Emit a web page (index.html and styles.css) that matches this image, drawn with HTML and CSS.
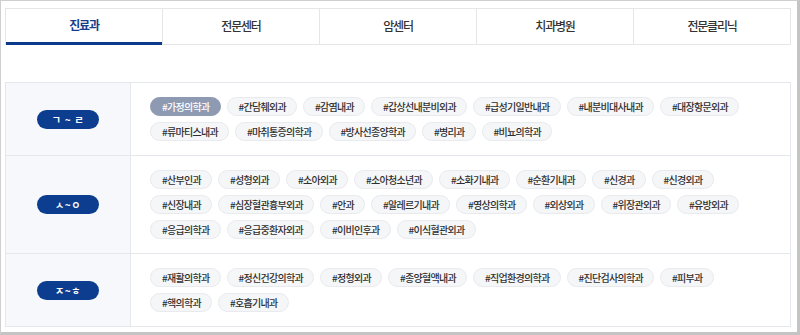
FILE: index.html
```html
<!DOCTYPE html>
<html lang="ko">
<head>
    <meta charset="UTF-8">
    <meta name="viewport" content="width=device-width, initial-scale=1.0">
    <title>진료과</title>
    <link rel="stylesheet" href="styles.css">
</head>
<body>

<div class="frame">
    <ul class="tabs">
        <li class="active">진료과</li>
        <li>전문센터</li>
        <li>암센터</li>
        <li>치과병원</li>
        <li>전문클리닉</li>
    </ul>

    <div class="dept-table">
        <div class="dept-row">
            <div class="dept-head"><span class="badge">ㄱ ~ ㄹ</span></div>
            <div class="dept-tags">
                <span class="tag on">#가정의학과</span>
                <span class="tag">#간담췌외과</span>
                <span class="tag">#감염내과</span>
                <span class="tag">#갑상선내분비외과</span>
                <span class="tag">#급성기일반내과</span>
                <span class="tag">#내분비대사내과</span>
                <span class="tag">#대장항문외과</span>
                <span class="tag">#류마티스내과</span>
                <span class="tag">#마취통증의학과</span>
                <span class="tag">#방사선종양학과</span>
                <span class="tag">#병리과</span>
                <span class="tag">#비뇨의학과</span>
            </div>
        </div>
        <div class="dept-row">
            <div class="dept-head"><span class="badge">ㅅ~ㅇ</span></div>
            <div class="dept-tags">
                <span class="tag">#산부인과</span>
                <span class="tag">#성형외과</span>
                <span class="tag">#소아외과</span>
                <span class="tag">#소아청소년과</span>
                <span class="tag">#소화기내과</span>
                <span class="tag">#순환기내과</span>
                <span class="tag">#신경과</span>
                <span class="tag">#신경외과</span>
                <span class="tag">#신장내과</span>
                <span class="tag">#심장혈관흉부외과</span>
                <span class="tag">#안과</span>
                <span class="tag">#알레르기내과</span>
                <span class="tag">#영상의학과</span>
                <span class="tag">#외상외과</span>
                <span class="tag">#위장관외과</span>
                <span class="tag">#유방외과</span>
                <span class="tag">#응급의학과</span>
                <span class="tag">#응급중환자외과</span>
                <span class="tag">#이비인후과</span>
                <span class="tag">#이식혈관외과</span>
            </div>
        </div>
        <div class="dept-row">
            <div class="dept-head"><span class="badge">ㅈ~ㅎ</span></div>
            <div class="dept-tags">
                <span class="tag">#재활의학과</span>
                <span class="tag">#정신건강의학과</span>
                <span class="tag">#정형외과</span>
                <span class="tag">#종양혈액내과</span>
                <span class="tag">#직업환경의학과</span>
                <span class="tag">#진단검사의학과</span>
                <span class="tag">#피부과</span>
                <span class="tag">#핵의학과</span>
                <span class="tag">#호흡기내과</span>
            </div>
        </div>
    </div>
</div>

</body>
</html>
```

FILE: styles.css
```css
* {
    box-sizing: border-box;
}

body {
    margin: 0;
    font-family: "Noto Sans CJK KR", "Noto Sans", sans-serif;
    background-color: #fff;
    color: #333;
}

.frame {
    width: 800px;
    height: 335px;
    border: 1px solid #cfcfcf;
    border-right-width: 3px;
    border-bottom-width: 3px;
    border-right-color: #c4c4c4;
    border-bottom-color: #c4c4c4;
    padding: 7px 6px 0 4px;
}

/* tabs */
.tabs {
    display: flex;
    list-style: none;
    margin: 0;
    padding: 0;
    border: 1px solid #e6e6e6;
    height: 37px;
}

.tabs li {
    flex: 1;
    display: flex;
    align-items: center;
    justify-content: center;
    font-size: 12px;
    font-weight: 500;
    letter-spacing: -1.2px;
    color: #333;
    border-left: 1px solid #e6e6e6;
    padding-bottom: 2px;
}

.tabs li:first-child {
    border-left: none;
}

.tabs li.active {
    color: #173e8c;
    font-weight: 700;
    border-bottom: 3px solid #0b3a8c;
    margin-bottom: -1px;
}

/* department table */
.dept-table {
    margin-top: 37px;
    border: 1px solid #e4e7eb;
}

.dept-row {
    display: flex;
    border-top: 1px solid #e4e7eb;
}

.dept-row:first-child {
    border-top: none;
}

.dept-head {
    width: 125px;
    flex-shrink: 0;
    background-color: #f6f8fb;
    border-right: 1px solid #e4e7eb;
    display: flex;
    align-items: center;
    justify-content: center;
}

.badge {
    display: inline-flex;
    align-items: center;
    justify-content: center;
    width: 62px;
    height: 19px;
    border-radius: 10px;
    background-color: #0c3d8e;
    color: #fff;
    font-size: 10px;
    font-weight: 700;
    letter-spacing: 0.5px;
}

.dept-tags {
    flex: 1;
    display: flex;
    flex-wrap: wrap;
    align-content: flex-start;
    gap: 6px 6px;
    padding: 14px 20px 14px 19px;
}

.tag {
    display: inline-flex;
    align-items: center;
    height: 19px;
    padding: 0 10px 0 11px;
    border-radius: 10px;
    background-color: #f5f6f8;
    border: 1px solid #e8eaee;
    font-size: 10px;
    font-weight: 500;
    letter-spacing: -0.7px;
    color: #2f2f2f;
}

.tag.on {
    background-color: #8e9ab2;
    border-color: #8e9ab2;
    color: #fff;
}
```
